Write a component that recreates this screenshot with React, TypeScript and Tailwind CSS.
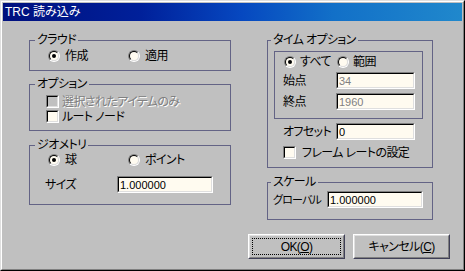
import type { ReactNode } from 'react'

function Radio({ checked }: { checked?: boolean }) {
  return (
    <span className="flex w-[12px] h-[12px] shrink-0 rounded-full border border-t-[#808080] border-l-[#808080] border-b-white border-r-white">
      <span className="flex flex-1 items-center justify-center rounded-full border border-t-black border-l-black border-b-[#dfdfdf] border-r-[#dfdfdf] bg-[#fffbf0]">
        {checked && <span className="w-[4px] h-[4px] rounded-full bg-black" />}
      </span>
    </span>
  )
}

function Check({ disabled }: { disabled?: boolean }) {
  return (
    <span className="flex w-[13px] h-[13px] shrink-0 border border-t-[#808080] border-l-[#808080] border-b-white border-r-white">
      <span
        className={
          'flex-1 border border-t-black border-l-black border-b-[#dfdfdf] border-r-[#dfdfdf] ' +
          (disabled ? 'bg-[#c0c0c0]' : 'bg-[#fffbf0]')
        }
      />
    </span>
  )
}

function Field({ value, width, dim }: { value: string; width: string; dim?: boolean }) {
  return (
    <div className={'flex shrink-0 h-[17px] border border-t-[#808080] border-l-[#808080] border-b-white border-r-white ' + width}>
      <div
        className={
          'flex-1 flex items-center pl-[1px] border border-t-black border-l-black border-b-[#dfdfdf] border-r-[#dfdfdf] bg-[#fffbf0] text-[11px] tracking-normal ' +
          (dim ? 'text-[#808080]' : 'text-black')
        }
      >
        {value}
      </div>
    </div>
  )
}

function Group({ title, legend, className, children }: { title: string; legend: string; className?: string; children: ReactNode }) {
  return (
    <fieldset className={'border border-[#636385] ' + (className ?? '')}>
      <legend className={'px-[2px] h-[14px] leading-[14px] whitespace-nowrap ' + legend}>{title}</legend>
      {children}
    </fieldset>
  )
}

function Button({ children, focused }: { children: ReactNode; focused?: boolean }) {
  return (
    <div className="flex w-[97px] h-[25px] border border-t-white border-l-white border-b-[#404058] border-r-[#404058]">
      <div className="flex flex-1 p-[2px] border border-t-[#dfdfdf] border-l-[#dfdfdf] border-b-[#808080] border-r-[#808080]">
        <div className={'flex flex-1 items-center justify-center border border-dotted ' + (focused ? 'border-black' : 'border-transparent')}>
          {children}
        </div>
      </div>
    </div>
  )
}

export default function App() {
  return (
    <div className="w-[465px] h-[271px] bg-[#c0c0c0] border border-t-[#dfdfdf] border-l-[#dfdfdf] border-b-black border-r-black font-['Liberation_Sans','Noto_Sans_CJK_JP',sans-serif] text-[12px] leading-[14px] tracking-[-0.6px] text-black whitespace-nowrap [font-feature-settings:'palt']">
      <div className="flex flex-col h-full p-px border border-t-white border-l-white border-b-[#808080] border-r-[#808080]">
        <div className="h-[18px] pl-[2px] leading-[18px] tracking-normal text-white bg-[linear-gradient(to_right,#00107e_0%,#00209a_30%,#0648c0_52%,#1270c8_72%,#2088cc_100%)]">
          TRC 読み込み
        </div>

        <div className="flex">
          {/* left column */}
          <div className="w-[202px] ml-[26px] mt-[12px] flex flex-col">
            <Group title="クラウド" legend="ml-[5px]">
              <div className="flex h-[14px] items-center mt-[2px] mb-[7px] pl-[18px]">
                <div className="flex w-[80px] items-center gap-[5px]">
                  <Radio checked />
                  <span>作成</span>
                </div>
                <div className="flex items-center gap-[5px]">
                  <Radio />
                  <span>適用</span>
                </div>
              </div>
            </Group>

            <Group title="オプション" legend="ml-[5px]" className="mt-[6px]">
              <div className="flex flex-col pt-[3px] pb-[6px] pl-[16px]">
                <div className="flex h-[15px] items-center gap-[3px]">
                  <Check disabled />
                  <span className="text-[#808080] [text-shadow:1px_1px_0_#fff]">選択されたアイテムのみ</span>
                </div>
                <div className="flex h-[15px] items-center gap-[3px]">
                  <Check />
                  <span>ルート ノード</span>
                </div>
              </div>
            </Group>

            <Group title="ジオメトリ" legend="ml-[5px]" className="mt-[7px]">
              <div className="flex flex-col pt-[1px] pb-[11px]">
                <div className="flex h-[14px] items-center pl-[18px]">
                  <div className="flex w-[80px] items-center gap-[5px]">
                    <Radio checked />
                    <span>球</span>
                  </div>
                  <div className="flex items-center gap-[5px]">
                    <Radio />
                    <span>ポイント</span>
                  </div>
                </div>
                <div className="flex items-center mt-[9px] pl-[15px]">
                  <span className="w-[72px] shrink-0">サイズ</span>
                  <Field value="1.000000" width="w-[96px]" />
                </div>
              </div>
            </Group>
          </div>

          {/* right column */}
          <div className="w-[166px] ml-[36px] mt-[12px] flex flex-col">
            <Group title="タイム オプション" legend="ml-[3px]">
              <div className="flex flex-col pt-[4px] pb-[8px]">
                <div className="ml-[6px] w-[149px] border border-[#636385] pt-[3px] pb-[8px]">
                  <div className="flex h-[14px] items-center pl-[9px]">
                    <div className="flex w-[53px] items-center gap-[4px]">
                      <Radio checked />
                      <span>すべて</span>
                    </div>
                    <div className="flex items-center gap-[4px]">
                      <Radio />
                      <span>範囲</span>
                    </div>
                  </div>
                  <div className="flex items-center mt-[3px] pl-[8px]">
                    <span className="w-[53px] shrink-0">始点</span>
                    <Field value="34" width="w-[79px]" dim />
                  </div>
                  <div className="flex items-center mt-[4px] pl-[8px]">
                    <span className="w-[53px] shrink-0">終点</span>
                    <Field value="1960" width="w-[79px]" dim />
                  </div>
                </div>
                <div className="flex items-center mt-[4px] pl-[15px]">
                  <span className="w-[53px] shrink-0">オフセット</span>
                  <Field value="0" width="w-[79px]" />
                </div>
                <div className="flex h-[13px] items-center gap-[6px] mt-[6px] pl-[15px]">
                  <Check />
                  <span>フレーム レートの設定</span>
                </div>
              </div>
            </Group>

            <Group title="スケール" legend="ml-[3px]" className="mt-[7px]">
              <div className="flex items-center pt-[2px] pb-[11px] pl-[5px]">
                <span className="w-[54px] shrink-0 text-[11px] tracking-[-0.8px]">グローバル</span>
                <Field value="1.000000" width="w-[96px]" />
              </div>
            </Group>
          </div>
        </div>

        <div className="flex justify-end gap-[8px] mt-[14px] pr-[12px]">
          <Button focused>
            <span>
              OK(<span className="underline">O</span>)
            </span>
          </Button>
          <Button>
            <span>
              キャンセル(<span className="underline">C</span>)
            </span>
          </Button>
        </div>
      </div>
    </div>
  )
}
